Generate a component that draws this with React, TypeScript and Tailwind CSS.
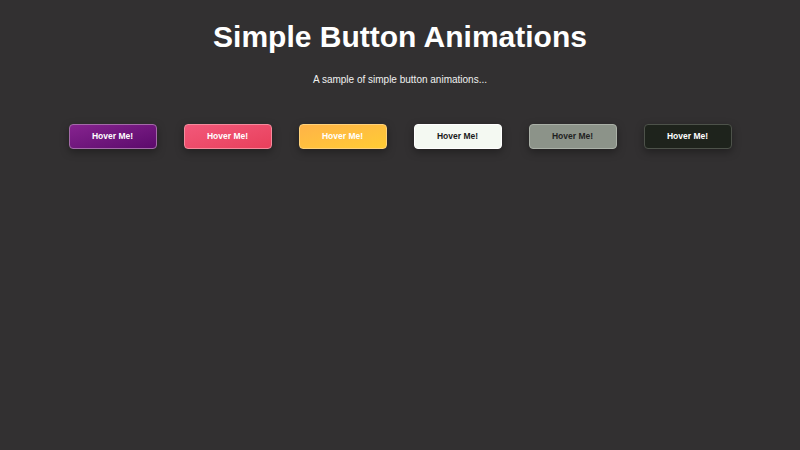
const buttons = [
  { label: 'Hover Me!', className: 'bg-gradient-to-br from-[#86238f] to-[#5c0a6c] border-[#a36aa8] text-white' },
  { label: 'Hover Me!', className: 'bg-gradient-to-br from-[#f2587a] to-[#e83f5b] border-[#f58a9c] text-white' },
  { label: 'Hover Me!', className: 'bg-gradient-to-br from-[#ffb347] to-[#ffcc33] border-[#ffd27a] text-white' },
  { label: 'Hover Me!', className: 'bg-[#f4f9f2] border-[#ffffff] text-[#1a1a1a]' },
  { label: 'Hover Me!', className: 'bg-[#8c9389] border-[#aab0a7] text-[#1f1f1f]' },
  { label: 'Hover Me!', className: 'bg-[#1e231c] border-[#4d524a] text-white' },
];

export default function App() {
  return (
    <div className="min-h-[450px] w-full bg-[#323031] font-['Liberation_Sans',Arial,sans-serif] text-white">
      <h1 className="pt-[18px] text-center text-[30px] font-bold leading-[38px]">Simple Button Animations</h1>
      <p className="mt-[17px] text-center text-[10px] leading-[14px] text-[#f0f0f0]">
        A sample of simple button animations...
      </p>
      <div className="mt-[37px] flex justify-center gap-[27px]">
        {buttons.map((b, i) => (
          <button
            key={i}
            className={`h-[25px] w-[88px] rounded-[4px] border text-[8.5px] font-bold shadow-[0_3px_8px_rgba(0,0,0,0.35)] ${b.className}`}
          >
            {b.label}
          </button>
        ))}
      </div>
    </div>
  );
}
